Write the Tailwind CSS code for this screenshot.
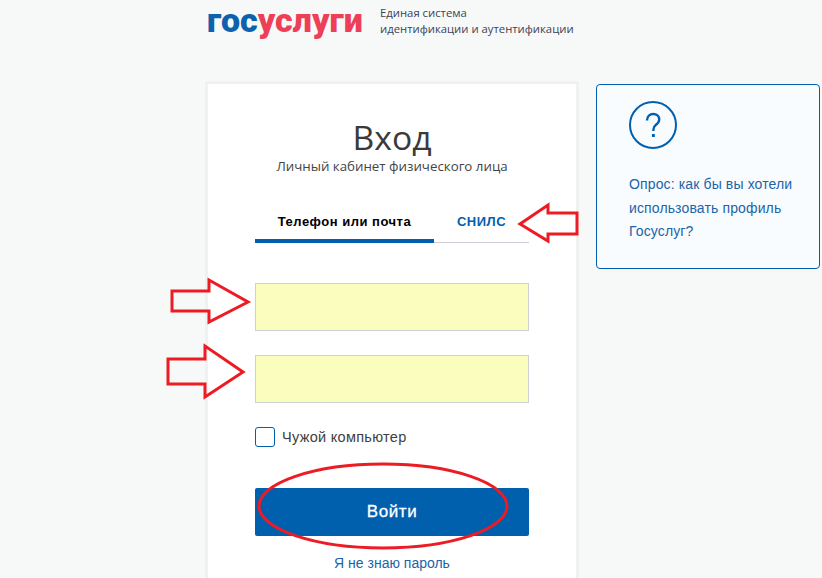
<!DOCTYPE html>
<html lang="ru">
<head>
<meta charset="utf-8">
<script src="https://cdn.jsdelivr.net/npm/@tailwindcss/browser@4"></script>
<title>Вход</title>
</head>
<body class="relative h-[578px] w-[822px] overflow-hidden bg-[#f7f9f9] font-['Liberation_Sans',sans-serif]">
  <header class="flex h-[81px] pl-[207px]">
    <div class="h-[40px] w-[173px] font-['Roboto',sans-serif] text-[34px] font-black leading-[40px] tracking-[0px]"><span class="text-[#0d62ab]">гос</span><span class="text-[#ee3f58]">услуги</span></div>
    <div class="mt-[5px] font-['Open_Sans',sans-serif] text-[11.3px] leading-[16px] text-[#3b4256]">
      <p>Единая система</p>
      <p>идентификации и аутентификации</p>
    </div>
  </header>

  <main class="flex items-start pl-[205px]">
    <section class="h-[500px] w-[374px] border-[3px] border-b-0 border-[#f0f1f2] bg-white px-[47px]">
      <h1 class="mt-[34px] text-center font-['Open_Sans',sans-serif] text-[33.7px] leading-[39px] text-[#3a3a3a]">Вход</h1>
      <p class="mt-[1px] text-center font-['Open_Sans',sans-serif] text-[13.3px] leading-[16px] text-[#444]">Личный кабинет физического лица</p>

      <div class="mt-[33px] flex h-[36px] border-b border-[#ccd0d6] text-[13px] font-bold tracking-[0.5px]">
        <div class="flex h-[36px] w-[179px] shrink-0 items-start justify-center border-b-[4px] border-[#0060ae] pt-[5px] text-black">Телефон или почта</div>
        <div class="flex flex-1 items-start justify-center pt-[5px] text-[#0060ae]">СНИЛС</div>
      </div>

      <div class="mt-[40px] h-[48px] border border-[#cdd1d6] bg-[#fafdbd]"></div>
      <div class="mt-[24px] h-[48px] border border-[#cdd1d6] bg-[#fafdbd]"></div>

      <label class="mt-[24px] flex h-[20px] items-center gap-[7px] text-[14.5px] tracking-[0.3px] text-[#3e3e3e]">
        <span class="h-[20px] w-[20px] rounded-[3px] border border-[#0060ae] bg-white"></span>
        <span class="pt-[1px]">Чужой компьютер</span>
      </label>

      <button class="mt-[41px] block h-[48px] w-full rounded-[2px] bg-[#0060ae] text-[17px] tracking-[0.6px] text-white [-webkit-text-stroke:0.3px_white]">Войти</button>
      <a class="mt-[18px] block text-center text-[14px] leading-[18px] text-[#1c63a8]">Я не знаю пароль</a>
    </section>

    <aside class="ml-[17px] mt-[3px] h-[185px] w-[224px] rounded-[4px] border border-[#0060ae] bg-[#f9fcff] pl-[32px] pt-[16px]">
      <svg class="h-[48px] w-[48px]" viewBox="0 0 48 48" fill="none" aria-hidden="true">
        <circle cx="24" cy="24" r="23" stroke="#0060ae" stroke-width="2"/>
        <path d="M18 19.500c0-4 2.600-6.500 6.200-6.500 3.500 0 6 2.200 6 5.400 0 2.600-1.400 3.900-3.200 5.300-1.800 1.400-2.600 2.500-2.600 4.800v1.500" stroke="#0060ae" stroke-width="2.400"/>
        <rect x="23" y="33" width="2.800" height="3" fill="#0060ae"/>
      </svg>
      <p class="mt-[24px] w-[186px] text-[14px] leading-[23.5px] tracking-[0.13px] text-[#1c63a8]">Опрос: как бы вы хотели использовать профиль Госуслуг?</p>
    </aside>
  </main>

  <svg class="pointer-events-none absolute left-0 top-0 h-[578px] w-[822px]" viewBox="0 0 822 578" fill="none" stroke="#ed1c24" stroke-width="3" aria-hidden="true">
    <polygon points="577,213 548,213 548,205 520,224 548,241 548,234 577,234"/>
    <polygon points="172,291 209,291 209,280 248,302 209,322 209,311 172,311"/>
    <polygon points="168,359 205,359 205,346 243,372 205,397 205,384 168,384"/>
    <ellipse cx="383" cy="506" rx="124" ry="42"/>
  </svg>
</body>
</html>
